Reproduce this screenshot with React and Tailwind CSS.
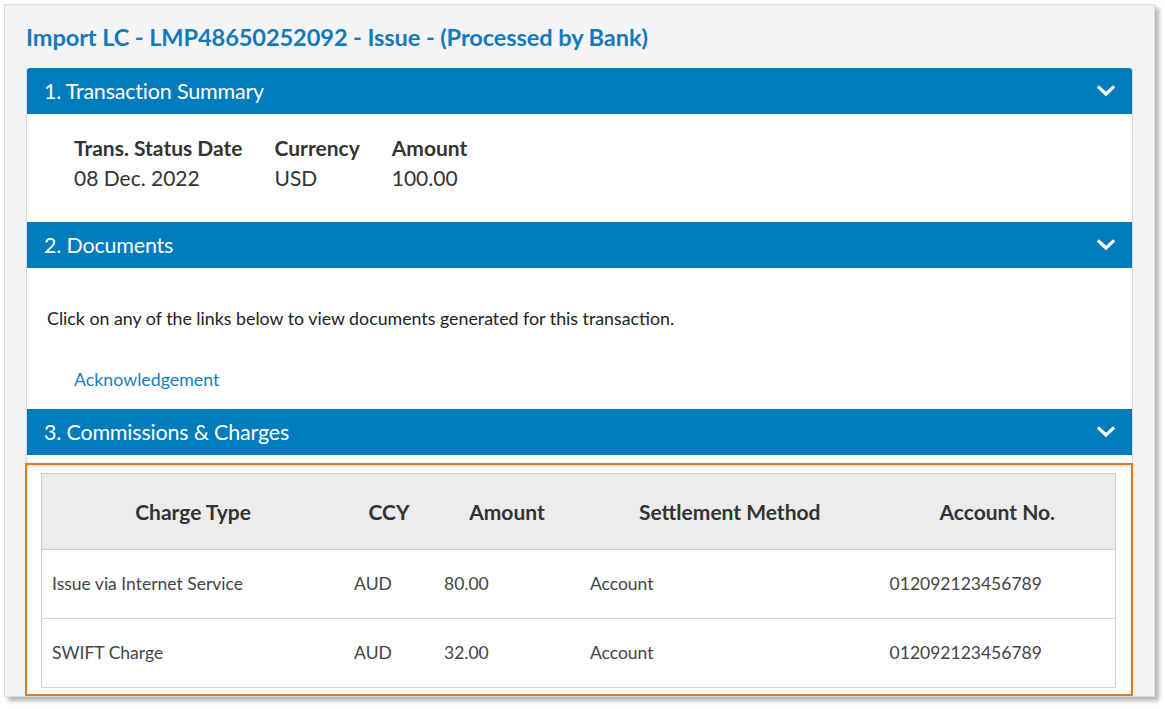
import React from 'react';

const font = { fontFamily: 'Lato, "Open Sans", sans-serif' };

function Chevron() {
  return (
    <svg width="18" height="12" viewBox="0 0 18 12" className="mr-[17px]">
      <path d="M2 2.5 L9 9 L16 2.5" fill="none" stroke="white" strokeWidth="3.2" strokeLinecap="square" />
    </svg>
  );
}

function SectionHeader({ title, rounded }) {
  return (
    <div className={`flex items-center justify-between h-[46px] bg-[#007bbb] text-white pl-[17px] ${rounded ? 'rounded-t-[3px]' : ''}`}>
      <span className="text-[21.5px] tracking-[-0.2px]">{title}</span>
      <Chevron />
    </div>
  );
}

const charges = [
  { type: 'Issue via Internet Service', ccy: 'AUD', amount: '80.00', method: 'Account', account: '012092123456789' },
  { type: 'SWIFT Charge', ccy: 'AUD', amount: '32.00', method: 'Account', account: '012092123456789' },
];

export default function App() {
  return (
    <div className="min-h-screen bg-white p-[4px]" style={font}>
      <div className="w-[1151px] h-[693px] bg-[#f4f4f4] border border-[#dcdcdc] shadow-[4px_4px_4px_rgba(0,0,0,0.28)] pl-[21px] pr-[21px] pt-[17px] overflow-hidden">
        <h1 className="text-[23.6px] leading-[30px] font-bold text-[#1479bd] mb-[16px] tracking-[-0.1px]">
          Import LC - LMP48650252092 - Issue - (Processed by Bank)
        </h1>

        <div className="w-[1107px] bg-white border-x border-[#d8d8d8]">
          <SectionHeader title="1. Transaction Summary" rounded />
          <div className="h-[108px] pl-[47px] pt-[20px] flex gap-[32px] text-[#333]">
            <div>
              <div className="text-[21px] font-bold leading-[28px]">Trans. Status Date</div>
              <div className="text-[21px] leading-[32px]">08 Dec. 2022</div>
            </div>
            <div>
              <div className="text-[21px] font-bold leading-[28px]">Currency</div>
              <div className="text-[21px] leading-[32px]">USD</div>
            </div>
            <div>
              <div className="text-[21px] font-bold leading-[28px]">Amount</div>
              <div className="text-[21px] leading-[32px]">100.00</div>
            </div>
          </div>

          <SectionHeader title="2. Documents" />
          <div className="h-[141px] pl-[20px] pt-[38px] text-[#222]">
            <p className="text-[17.8px] leading-[24px]">Click on any of the links below to view documents generated for this transaction.</p>
            <a href="#" className="block mt-[37px] ml-[27px] text-[17.8px] leading-[24px] text-[#1a7dc0]">Acknowledgement</a>
          </div>

          <SectionHeader title="3. Commissions & Charges" />
          <div className="h-[8px]" />
        </div>

        <div className="w-[1108px] h-[233px] -ml-[1px] border-2 border-[#e27c12] bg-white pt-[8px] pl-[14px] pr-[15px] shadow-[inset_0_2px_3px_rgba(0,0,0,0.12)]">
          <table className="w-[1075px] border-collapse border border-[#cfcfcf] text-[#444]" style={font}>
            <colgroup>
              <col className="w-[303px]" />
              <col className="w-[90px]" />
              <col className="w-[146px]" />
              <col className="w-[300px]" />
              <col className="w-[236px]" />
            </colgroup>
            <thead>
              <tr className="bg-[#ececec] h-[76px] border-b border-[#cfcfcf]">
                {['Charge Type', 'CCY', 'Amount', 'Settlement Method', 'Account No.'].map((h) => (
                  <th key={h} className="text-center font-bold text-[21px] text-[#333]">{h}</th>
                ))}
              </tr>
            </thead>
            <tbody>
              {charges.map((c, i) => (
                <tr key={i} className="h-[69px] border-b border-[#d6d6d6]">
                  <td className="pl-[10px] text-[17.5px]">{c.type}</td>
                  <td className="pl-[10px] text-[17.5px]">{c.ccy}</td>
                  <td className="pl-[10px] text-[17.5px]">{c.amount}</td>
                  <td className="pl-[10px] text-[17.5px]">{c.method}</td>
                  <td className="pl-[10px] text-[17.5px]">{c.account}</td>
                </tr>
              ))}
            </tbody>
          </table>
        </div>
      </div>
    </div>
  );
}
